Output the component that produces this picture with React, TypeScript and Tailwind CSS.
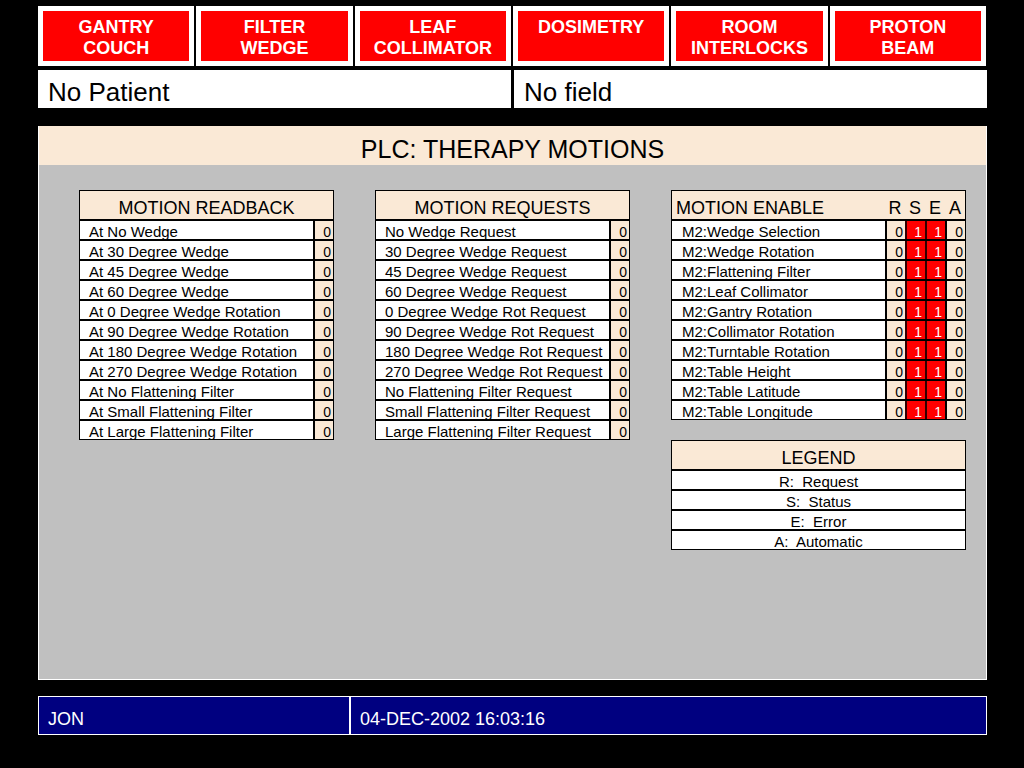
import React from "react";

const BEIGE = "bg-[#fae9d6]";

const buttons = [
  ["GANTRY", "COUCH"],
  ["FILTER", "WEDGE"],
  ["LEAF", "COLLIMATOR"],
  ["DOSIMETRY"],
  ["ROOM", "INTERLOCKS"],
  ["PROTON", "BEAM"],
];

const readback = [
  "At No Wedge",
  "At 30 Degree Wedge",
  "At 45 Degree Wedge",
  "At 60 Degree Wedge",
  "At 0 Degree Wedge Rotation",
  "At 90 Degree Wedge Rotation",
  "At 180 Degree Wedge Rotation",
  "At 270 Degree Wedge Rotation",
  "At No Flattening Filter",
  "At Small Flattening Filter",
  "At Large Flattening Filter",
];

const requests = [
  "No Wedge Request",
  "30 Degree Wedge Request",
  "45 Degree Wedge Request",
  "60 Degree Wedge Request",
  "0 Degree Wedge Rot Request",
  "90 Degree Wedge Rot Request",
  "180 Degree Wedge Rot Request",
  "270 Degree Wedge Rot Request",
  "No Flattening Filter Request",
  "Small Flattening Filter Request",
  "Large Flattening Filter Request",
];

const enables = [
  "M2:Wedge Selection",
  "M2:Wedge Rotation",
  "M2:Flattening Filter",
  "M2:Leaf Collimator",
  "M2:Gantry Rotation",
  "M2:Collimator Rotation",
  "M2:Turntable Rotation",
  "M2:Table Height",
  "M2:Table Latitude",
  "M2:Table Longitude",
];

const legend = ["R:  Request", "S:  Status", "E:  Error", "A:  Automatic"];

function Value({ v, red }: { v: string; red?: boolean }) {
  return (
    <div
      className={
        red
          ? "w-[20px] h-[18px] border-l-2 border-[#300] bg-[#ff0000] text-white text-right pr-[3px] text-[14px] leading-[22px] overflow-hidden"
          : `w-[20px] h-[18px] border-l-2 border-black ${BEIGE} text-black text-right pr-[2px] text-[14px] leading-[22px] overflow-hidden`
      }
    >
      {v}
    </div>
  );
}

function SimpleTable({ title, rows }: { title: string; rows: string[] }) {
  return (
    <div className="w-[255px] border border-black">
      <div className={`h-[28px] ${BEIGE} text-center text-[18px] leading-[20px] pt-[7px]`}>
        {title}
      </div>
      {rows.map((r) => (
        <div key={r} className="h-[20px] flex border-t-2 border-black">
          <div className="flex-1 h-[18px] bg-white pl-[9px] text-[15px] leading-[22px] overflow-hidden whitespace-nowrap">
            {r}
          </div>
          <Value v="0" />
        </div>
      ))}
    </div>
  );
}

function EnableTable() {
  return (
    <div className="w-[295px] border border-black">
      <div className={`h-[28px] ${BEIGE} flex text-[18px] leading-[20px] pt-[7px]`}>
        <div className="flex-1 pl-[4px]">MOTION ENABLE</div>
        {["R", "S", "E", "A"].map((c) => (
          <div key={c} className="w-[20px] text-center">
            {c}
          </div>
        ))}
      </div>
      {enables.map((r) => (
        <div key={r} className="h-[20px] flex border-t-2 border-black">
          <div className="flex-1 h-[18px] bg-white pl-[10px] text-[15px] leading-[22px] overflow-hidden whitespace-nowrap">
            {r}
          </div>
          <Value v="0" />
          <Value v="1" red />
          <Value v="1" red />
          <Value v="0" />
        </div>
      ))}
    </div>
  );
}

function Legend() {
  return (
    <div className="w-[295px] border border-black mt-[20px]">
      <div className={`h-[28px] ${BEIGE} text-center text-[18px] leading-[20px] pt-[7px]`}>
        LEGEND
      </div>
      {legend.map((r) => (
        <div
          key={r}
          className="h-[20px] border-t-2 border-black bg-white text-center text-[15px] leading-[22px] overflow-hidden whitespace-pre"
        >
          {r}
        </div>
      ))}
    </div>
  );
}

export default function App() {
  return (
    <div className="w-[1024px] h-[768px] bg-black pt-[6px] pl-[38px] flex flex-col font-['Liberation_Sans',Arial,sans-serif] text-black">
      <div className="w-[948px] h-[60px] grid grid-cols-6 gap-[2px]">
        {buttons.map((b) => (
          <div key={b.join()} className="bg-white p-[5px]">
            <div className="h-full bg-[#ff0000] text-white font-bold text-[18px] leading-[21px] text-center pt-[6px]">
              {b.map((l) => (
                <div key={l}>{l}</div>
              ))}
            </div>
          </div>
        ))}
      </div>

      <div className="w-[949px] h-[38px] mt-[4px] grid grid-cols-2 gap-[3px]">
        <div className="bg-white pl-[10px] pt-[6px] text-[26px] leading-[32px]">No Patient</div>
        <div className="bg-white pl-[10px] pt-[6px] text-[26px] leading-[32px]">No field</div>
      </div>

      <div className="w-[949px] h-[554px] mt-[18px] flex flex-col border-x border-b border-white">
        <div className={`h-[39px] ${BEIGE} text-center text-[25px] leading-[30px] pt-[8px]`}>
          PLC: THERAPY MOTIONS
        </div>
        <div className="flex-1 bg-[#c0c0c0] pt-[25px] pl-[40px] flex items-start gap-[41px]">
          <SimpleTable title="MOTION READBACK" rows={readback} />
          <SimpleTable title="MOTION REQUESTS" rows={requests} />
          <div className="flex flex-col">
            <EnableTable />
            <Legend />
          </div>
        </div>
      </div>

      <div className="w-[949px] h-[39px] mt-[16px] flex border border-white bg-[#000080] text-white text-[18px] leading-[20px]">
        <div className="w-[312px] border-r-2 border-white pl-[9px] pt-[12px]">JON</div>
        <div className="flex-1 pl-[9px] pt-[12px]">04-DEC-2002 16:03:16</div>
      </div>
    </div>
  );
}
